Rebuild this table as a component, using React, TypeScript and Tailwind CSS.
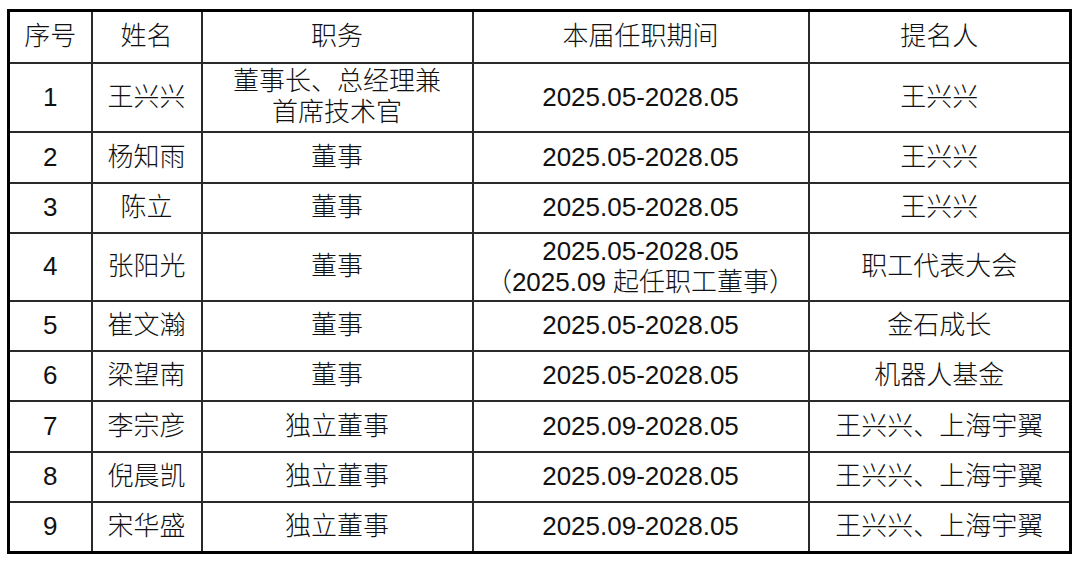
import type { ReactNode } from 'react';

type Row = {
  no: string;
  name: string;
  title: ReactNode;
  term: ReactNode;
  nominator: string;
  h: string;
};

const zh = 'font-light';

const rows: Row[] = [
  {
    no: '1',
    name: '王兴兴',
    title: (
      <>
        董事长、总经理兼
        <br />
        首席技术官
      </>
    ),
    term: '2025.05-2028.05',
    nominator: '王兴兴',
    h: 'h-[69px]',
  },
  { no: '2', name: '杨知雨', title: '董事', term: '2025.05-2028.05', nominator: '王兴兴', h: 'h-[51px]' },
  { no: '3', name: '陈立', title: '董事', term: '2025.05-2028.05', nominator: '王兴兴', h: 'h-[50px]' },
  {
    no: '4',
    name: '张阳光',
    title: '董事',
    term: (
      <>
        2025.05-2028.05
        <br />
        <span className={zh}>（</span>2025.09 <span className={zh}>起任职工董事）</span>
      </>
    ),
    nominator: '职工代表大会',
    h: 'h-[68px]',
  },
  { no: '5', name: '崔文瀚', title: '董事', term: '2025.05-2028.05', nominator: '金石成长', h: 'h-[50px]' },
  { no: '6', name: '梁望南', title: '董事', term: '2025.05-2028.05', nominator: '机器人基金', h: 'h-[50px]' },
  { no: '7', name: '李宗彦', title: '独立董事', term: '2025.09-2028.05', nominator: '王兴兴、上海宇翼', h: 'h-[51px]' },
  { no: '8', name: '倪晨凯', title: '独立董事', term: '2025.09-2028.05', nominator: '王兴兴、上海宇翼', h: 'h-[50px]' },
  { no: '9', name: '宋华盛', title: '独立董事', term: '2025.09-2028.05', nominator: '王兴兴、上海宇翼', h: 'h-[51px]' },
];

const cell = 'border-2 border-[#2a2a2a] text-center align-middle p-0';

function App() {
  return (
    <div
      className="w-[1080px] h-[564px] bg-white overflow-hidden pt-[9px] pl-[7px] text-[#111] text-[26px] leading-[31px]"
      style={{ fontFamily: '"Liberation Sans", Arial, "Noto Sans CJK SC", sans-serif' }}
    >
      <table className="w-[1065px] table-fixed border-collapse border-[3px] border-black">
        <colgroup>
          <col className="w-[83px]" />
          <col className="w-[110px]" />
          <col className="w-[271px]" />
          <col className="w-[336px]" />
          <col className="w-[262px]" />
        </colgroup>
        <thead>
          <tr className="h-[52px]">
            <th className={`${cell} font-light`}>序号</th>
            <th className={`${cell} font-light`}>姓名</th>
            <th className={`${cell} font-light`}>职务</th>
            <th className={`${cell} font-light`}>本届任职期间</th>
            <th className={`${cell} font-light`}>提名人</th>
          </tr>
        </thead>
        <tbody>
          {rows.map((r) => (
            <tr key={r.no} className={r.h}>
              <td className={cell}>{r.no}</td>
              <td className={`${cell} ${zh}`}>{r.name}</td>
              <td className={`${cell} ${zh}`}>{r.title}</td>
              <td className={cell}>{r.term}</td>
              <td className={`${cell} ${zh}`}>{r.nominator}</td>
            </tr>
          ))}
        </tbody>
      </table>
    </div>
  );
}

export default App;
